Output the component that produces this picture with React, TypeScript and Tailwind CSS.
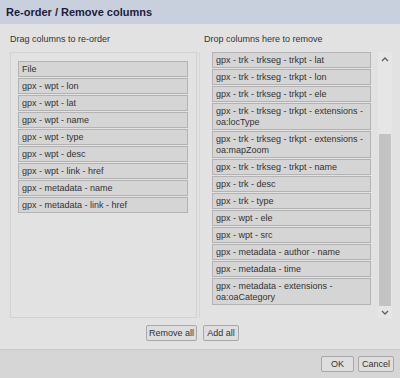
import React from "react";

const leftItems = [
  "File",
  "gpx - wpt - lon",
  "gpx - wpt - lat",
  "gpx - wpt - name",
  "gpx - wpt - type",
  "gpx - wpt - desc",
  "gpx - wpt - link - href",
  "gpx - metadata - name",
  "gpx - metadata - link - href",
];

const rightItems = [
  "gpx - trk - trkseg - trkpt - lat",
  "gpx - trk - trkseg - trkpt - lon",
  "gpx - trk - trkseg - trkpt - ele",
  "gpx - trk - trkseg - trkpt - extensions - oa:locType",
  "gpx - trk - trkseg - trkpt - extensions - oa:mapZoom",
  "gpx - trk - trkseg - trkpt - name",
  "gpx - trk - desc",
  "gpx - trk - type",
  "gpx - wpt - ele",
  "gpx - wpt - src",
  "gpx - metadata - author - name",
  "gpx - metadata - time",
  "gpx - metadata - extensions - oa:oaCategory",
];

function Item({ label }: { label: string }) {
  return (
    <div className="mb-[1px] border border-[#b3b3b3] bg-[#d5d5d5] pl-[3px] pr-[2px] pt-[2px] pb-[1px] text-[9px] leading-[11px] text-[#333]">
      {label}
    </div>
  );
}

function Button({ label, w }: { label: string; w: string }) {
  return (
    <button
      className={`${w} h-[16px] rounded-[2px] border border-[#a8a8a8] bg-[#dedede] text-[9px] leading-[14px] text-[#333]`}
    >
      {label}
    </button>
  );
}

export default function App() {
  return (
    <div
      className="flex h-[378px] w-[400px] flex-col overflow-hidden bg-[#e2e2e2]"
      style={{ fontFamily: '"Liberation Sans", Arial, sans-serif' }}
    >
      <div className="flex h-[24px] items-center bg-[#c7d0dc] px-[6px] text-[11px] font-bold text-[#1c1c3c]">
        Re-order / Remove columns
      </div>

      <div className="flex flex-1 flex-col pt-[10px]">
        <div className="flex text-[9px] leading-[11px] text-[#333]">
          <div className="w-[199px] pl-[10px]">Drag columns to re-order</div>
          <div className="pl-[5px]">Drop columns here to remove</div>
        </div>

        <div className="mt-[7px] flex h-[266px]">
          <div className="ml-[10px] w-[187px] border border-[#d2d2d2] pl-[7px] pr-[8px] pt-[8px]">
            {leftItems.map((t) => (
              <Item key={t} label={t} />
            ))}
          </div>
          <div className="ml-[2px] flex w-[193px] border-l border-[#d6d6d6] pl-[12px]">
            <div className="w-[159px] overflow-hidden">
              {rightItems.map((t) => (
                <Item key={t} label={t} />
              ))}
            </div>
            <div className="ml-[7px] flex w-[14px] flex-col items-center bg-[#e6e6e6]">
              <svg className="mt-[4px]" width="8" height="6" viewBox="0 0 8 6">
                <path d="M1 5 L4 2 L7 5" fill="none" stroke="#606060" strokeWidth="1.3" />
              </svg>
              <div className="mt-[72px] h-[172px] w-[12px] bg-[#c3c3c3]" />
              <svg className="mt-[4px]" width="8" height="6" viewBox="0 0 8 6">
                <path d="M1 1 L4 4 L7 1" fill="none" stroke="#606060" strokeWidth="1.3" />
              </svg>
            </div>
          </div>
        </div>

        <div className="mt-[7px] flex gap-[6px] pl-[146px]">
          <Button label="Remove all" w="w-[51px]" />
          <Button label="Add all" w="w-[36px]" />
        </div>

        <div className="mt-auto flex h-[29px] items-start justify-end gap-[4px] border-t border-[#cacaca] bg-[#d6d6d6] pr-[6px] pt-[6px]">
          <Button label="OK" w="w-[33px]" />
          <Button label="Cancel" w="w-[36px]" />
        </div>
      </div>
    </div>
  );
}
